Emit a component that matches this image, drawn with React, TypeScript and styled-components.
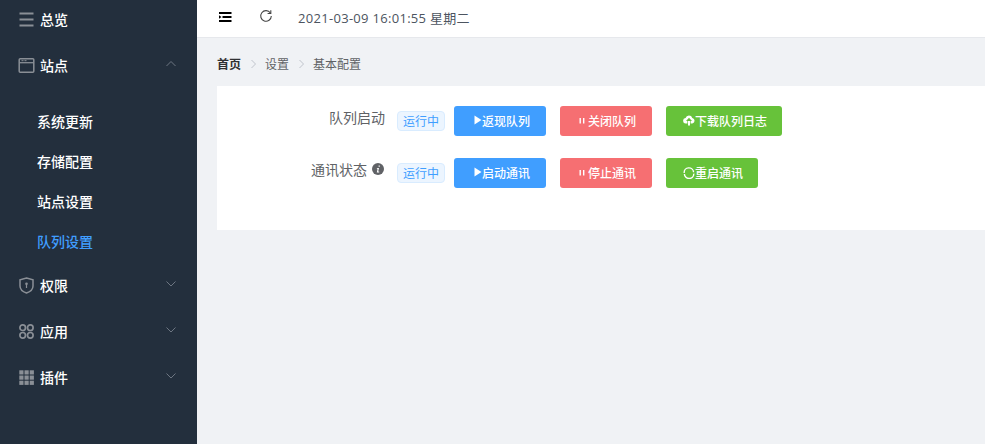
import React from "react";
import styled, { createGlobalStyle } from "styled-components";

const Global = createGlobalStyle`
  html, body { margin: 0; padding: 0; height: 100%; overflow: hidden; }
  #root { height: 444px; }
  body { font-family: "Open Sans", "Noto Sans CJK SC", "Liberation Sans", sans-serif; }
`;
const Page = styled.div`display: flex; width: 985px; height: 444px; background: #f0f2f5; overflow: hidden;`;
const Sidebar = styled.aside`width: 197px; flex: none; background: #232f3d; display: flex; flex-direction: column;`;
const MenuRow = styled.div<{ $top?: number }>`
  height: 46px; display: flex; align-items: center; padding-left: 18px; color: #fff; font-size: 14px; font-weight: 500;
  position: relative; margin-top: ${p => p.$top ?? 0}px;
  svg.main { width: 17px; height: 17px; margin-right: 5px; flex: none; }
`;
const Arrow = styled.svg`position: absolute; left: 165px; top: 18px; width: 12px; height: 8px;`;
const Sub = styled.div<{ $active?: boolean }>`
  height: 40px; display: flex; align-items: center; padding-left: 37px; font-size: 14px; font-weight: 500;
  color: ${p => (p.$active ? "#409eff" : "#fff")};
`;
const SubList = styled.div`padding-top: 13px;`;
const Main = styled.main`flex: 1; display: flex; flex-direction: column; min-width: 0;`;
const Header = styled.header`height: 37px; background: #fff; border-bottom: 1px solid #e6e8ec; display: flex; align-items: center; flex: none; padding-left: 22px;`;
const Time = styled.span`font-size: 13px; letter-spacing: 0.3px; color: #4c5460; margin-left: 25px; margin-top: -3px;`;
const Crumbs = styled.nav`height: 48px; display: flex; align-items: center; padding-left: 20px; font-size: 12px; flex: none; padding-top: 4px; box-sizing: border-box;`;
const Crumb = styled.span<{ $strong?: boolean }>`color: ${p => (p.$strong ? "#303133" : "#606266")}; font-weight: ${p => (p.$strong ? 700 : 400)};`;
const Sep = styled.svg`width: 7px; height: 10px; margin: 0 8.5px; flex: none;`;
const Card = styled.section`margin-left: 20px; height: 144px; background: #fff; padding-top: 20px; box-sizing: border-box; display: flex; flex-direction: column; gap: 22px;`;
const Row = styled.div`display: flex; align-items: center; height: 30px;`;
const Label = styled.div`width: 168px; text-align: right; color: #606266; font-size: 14px; display: flex; justify-content: flex-end; align-items: center; margin-top: -8px; gap: 5px;`;
const Tag = styled.span`
  margin-left: 12px; width: 48px; height: 20px; box-sizing: border-box; background: #ecf5ff; border: 1px solid #d9ecff;
  border-radius: 4px; color: #409eff; font-size: 12px; display: flex; align-items: center; justify-content: center;
`;
const Btn = styled.button<{ $bg: string; $w: number; $ml?: number; $pad?: number }>`
  width: ${p => p.$w}px; height: 30px; margin-left: ${p => p.$ml ?? 14}px; padding: 0 0 0 ${p => p.$pad ?? 2}px; border: none; border-radius: 3px;
  background: ${p => p.$bg}; color: #fff; font-family: inherit; font-size: 12px; font-weight: 500; display: flex; align-items: center; justify-content: center;
  svg { flex: none; }
`;
const Info = styled.svg`width: 12px; height: 12px; flex: none; margin-right: 1px;`;

const Play = () => <svg width="8" height="10" viewBox="0 0 8 10" style={{ marginTop: -2 }}><path d="M0.5 0.5 L7.5 5 L0.5 9.5Z" fill="#fff" /></svg>;
const Pause = () => <svg width="9" height="8" viewBox="0 0 9 8" style={{ marginRight: 1, marginTop: -1 }}><path d="M1.5 1h1.4v5.5H1.5zM5 1h1.4v5.5H5z" fill="#fff" /></svg>;
const Cloud = () => <svg width="12" height="11" viewBox="0 0 12 11" style={{ marginTop: -2 }}><path d="M3 8.5a2.7 2.7 0 0 1-.4-5.4A3.5 3.5 0 0 1 9.3 3a2.8 2.8 0 0 1 0 5.5H7.6V6h1.4L6 2.8 3 6h1.4v2.5zM5 6h2v4.5H5z" fill="#fff" /></svg>;
const Reload = () => <svg width="12" height="12" viewBox="0 0 12 12" style={{ marginTop: -1 }}><path d="M1.2 6A4.7 4.7 0 0 1 10.6 5.2M10.8 6.6A4.7 4.7 0 0 1 1.4 7" fill="none" stroke="#fff" strokeWidth="1.4" /></svg>;
const Down = () => <Arrow viewBox="0 0 12 8"><path d="M1.5 1.5 L6 6 L10.5 1.5" fill="none" stroke="#6d7682" strokeWidth="1" /></Arrow>;
const Up = () => <Arrow viewBox="0 0 12 8"><path d="M1.5 6 L6 1.5 L10.5 6" fill="none" stroke="#6d7682" strokeWidth="1" /></Arrow>;
const Chevron = () => <Sep viewBox="0 0 7 10"><path d="M1.5 1 L5.5 5 L1.5 9" fill="none" stroke="#c0c4cc" strokeWidth="1" /></Sep>;

export default function App() {
  const g = "#8a8f96";
  return (
    <Page>
      <Global />
      <Sidebar>
        <MenuRow $top={-4}>
          <svg className="main" viewBox="0 0 17 17"><path d="M1.5 2.5h14M1.5 8.5h14M1.5 14.5h14" stroke={g} strokeWidth="1.8" fill="none" /></svg>
          总览
        </MenuRow>
        <MenuRow>
          <svg className="main" viewBox="0 0 17 17"><rect x="1.2" y="1.7" width="14.6" height="13.6" rx="1" fill="none" stroke={g} strokeWidth="1.5" /><path d="M1.2 5.7h14.6" stroke={g} strokeWidth="1.3" /><path d="M3.5 3.7h2M6.5 3.7h2" stroke={g} /></svg>
          站点
          <Up />
        </MenuRow>
        <SubList>
          <Sub>系统更新</Sub>
          <Sub>存储配置</Sub>
          <Sub>站点设置</Sub>
          <Sub $active>队列设置</Sub>
        </SubList>
        <MenuRow $top={1}>
          <svg className="main" viewBox="0 0 17 17"><path d="M8.5 1 L15 2.8 V9 C15 12.5 12 14.8 8.5 16 C5 14.8 2 12.5 2 9 V2.8Z" fill="none" stroke={g} strokeWidth="1.5" /><circle cx="8.5" cy="6.8" r="1.3" fill={g} /><path d="M8.5 7v4" stroke={g} strokeWidth="1.2" /></svg>
          权限
          <Down />
        </MenuRow>
        <MenuRow>
          <svg className="main" viewBox="0 0 17 17"><g fill="none" stroke={g} strokeWidth="1.7"><circle cx="4.7" cy="4.7" r="2.8" /><circle cx="12.3" cy="4.7" r="2.8" /><circle cx="4.7" cy="12.3" r="2.8" /><circle cx="12.3" cy="12.3" r="2.8" /></g></svg>
          应用
          <Down />
        </MenuRow>
        <MenuRow>
          <svg className="main" viewBox="0 0 17 17"><g fill={g}><rect x="1.3" y="1.3" width="4.2" height="4.2" /><rect x="6.5" y="1.3" width="4.2" height="4.2" /><rect x="11.7" y="1.3" width="4.2" height="4.2" /><rect x="1.3" y="6.5" width="4.2" height="4.2" /><rect x="6.5" y="6.5" width="4.2" height="4.2" /><rect x="11.7" y="6.5" width="4.2" height="4.2" /><rect x="1.3" y="11.7" width="4.2" height="4.2" /><rect x="6.5" y="11.7" width="4.2" height="4.2" /><rect x="11.7" y="11.7" width="4.2" height="4.2" /></g></svg>
          插件
          <Down />
        </MenuRow>
      </Sidebar>
      <Main>
        <Header>
          <svg width="13" height="10" viewBox="0 0 13 10" style={{ marginTop: -4 }}><path d="M0 1h12.5M3.5 5h9M0 9h12.5" stroke="#000" strokeWidth="2" fill="none" /><path d="M0 3.2 L2.5 5 L0 6.8Z" fill="#000" /></svg>
          <svg width="14" height="14" viewBox="0 0 14 14" style={{ marginLeft: 27, marginTop: -5 }}><path d="M11.4 4A5.3 5.3 0 1 0 12.3 7" fill="none" stroke="#444" strokeWidth="1.1" /><path d="M11.8 1.2v3.3H8.6" fill="none" stroke="#444" strokeWidth="1.1" /></svg>
          <Time>2021-03-09 16:01:55 星期二</Time>
        </Header>
        <Crumbs>
          <Crumb $strong>首页</Crumb><Chevron /><Crumb>设置</Crumb><Chevron /><Crumb>基本配置</Crumb>
        </Crumbs>
        <Card>
          <Row>
            <Label>队列启动</Label>
            <Tag>运行中</Tag>
            <Btn $bg="#409eff" $w={92} $ml={9} $pad={4}><Play />返现队列</Btn>
            <Btn $bg="#f66f72" $w={92}><Pause />关闭队列</Btn>
            <Btn $bg="#67c23a" $w={116}><Cloud />下载队列日志</Btn>
          </Row>
          <Row>
            <Label>通讯状态
              <Info viewBox="0 0 12 12"><circle cx="6" cy="6" r="6" fill="#606266" /><path d="M6.6 2.6h1.2v1.2H6.6zM5 5h2l-.8 3.6h1v.8H4.8l.8-3.6h-.8z" fill="#fff" /></Info>
            </Label>
            <Tag>运行中</Tag>
            <Btn $bg="#409eff" $w={92} $ml={9} $pad={4}><Play />启动通讯</Btn>
            <Btn $bg="#f66f72" $w={92}><Pause />停止通讯</Btn>
            <Btn $bg="#67c23a" $w={92}><Reload />重启通讯</Btn>
          </Row>
        </Card>
      </Main>
    </Page>
  );
}
